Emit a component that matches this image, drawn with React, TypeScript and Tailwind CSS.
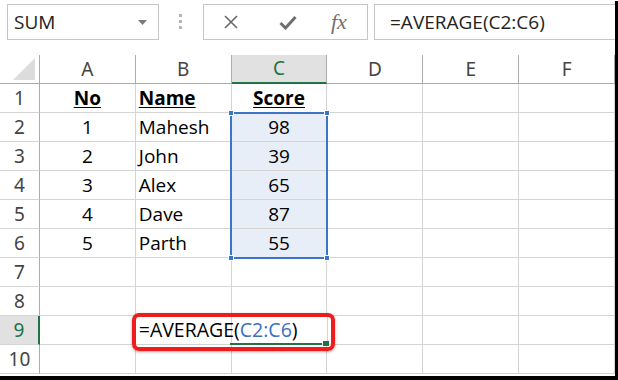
import React from "react";

const cols = ["A", "B", "C", "D", "E", "F"];

const rows: { no?: string; name?: string; score?: string }[] = [
  { no: "No", name: "Name", score: "Score" },
  { no: "1", name: "Mahesh", score: "98" },
  { no: "2", name: "John", score: "39" },
  { no: "3", name: "Alex", score: "65" },
  { no: "4", name: "Dave", score: "87" },
  { no: "5", name: "Parth", score: "55" },
  {},
  {},
  {},
  {},
];

const cellFont = { fontFamily: "'Open Sans', 'Liberation Sans', sans-serif" };

const Toolbar = () => (
  <div className="flex items-start h-[54px] pt-[3px] pl-[7px]">
    <div className="w-[152px] h-[36px] border border-[#c6c6c6] flex items-center justify-between pl-[6px] pr-[11px]">
      <span className="text-[19px] text-[#222] leading-none" style={cellFont}>
        SUM
      </span>
      <svg width="9" height="5" viewBox="0 0 9 5">
        <polygon points="0,0 9,0 4.5,5" fill="#7a7a7a" />
      </svg>
    </div>
    <div className="flex flex-col gap-[3px] ml-[20px] mt-[10px]">
      <div className="w-[3px] h-[3px] bg-[#b5b5b5]" />
      <div className="w-[3px] h-[3px] bg-[#b5b5b5]" />
      <div className="w-[3px] h-[3px] bg-[#b5b5b5]" />
    </div>
    <div className="ml-[21px] w-[165px] h-[36px] border border-[#c6c6c6] flex items-center">
      <svg width="16" height="16" viewBox="0 0 16 16" className="ml-[19px]">
        <path d="M2 2 L14 14 M14 2 L2 14" stroke="#666" strokeWidth="1.6" />
      </svg>
      <svg width="18" height="15" viewBox="0 0 18 15" className="ml-[40px]">
        <path d="M1.5 8 L6.5 13 L16.5 2" stroke="#6e6e6e" strokeWidth="3" fill="none" />
      </svg>
      <span
        className="ml-[34px] text-[22px] italic text-[#707070] leading-none"
        style={{ fontFamily: "'Liberation Serif', 'DejaVu Serif', serif" }}
      >
        fx
      </span>
    </div>
    <div className="ml-[6px] flex-1 h-[36px] border border-[#c6c6c6] border-r-0 flex items-center pl-[15px]">
      <span className="text-[19px] text-[#222] leading-none" style={cellFont}>
        =AVERAGE(C2:C6)
      </span>
    </div>
  </div>
);

const HeaderRow = () => (
  <div className="flex h-[29px]">
    <div className="w-[40px] border-r border-b border-[#ababab] relative">
      <svg width="22" height="22" viewBox="0 0 22 22" className="absolute right-[4px] bottom-[3px]">
        <polygon points="22,0 22,22 0,22" fill="#dcdcdc" />
      </svg>
    </div>
    {cols.map((c) => (
      <div
        key={c}
        className={
          c === "C"
            ? "w-[96px] bg-[#e1e1e1] border-b-2 border-[#217346] border-r border-r-[#ababab] flex items-center justify-center text-[19px] text-[#217346]"
            : "w-[96px] border-r border-b border-[#ababab] flex items-center justify-center text-[19px] text-[#444]"
        }
        style={{ fontFamily: "'Noto Sans', 'Open Sans', sans-serif" }}
      >
        {c}
      </div>
    ))}
  </div>
);

const App = () => {
  return (
    <div className="w-[618px] h-[380px] bg-black">
      <div className="w-[615px] h-[375px] mt-[1px] bg-white overflow-hidden relative">
        <Toolbar />
        <HeaderRow />
        {rows.map((r, i) => {
          const n = i + 1;
          const sel = n >= 2 && n <= 6;
          const active = n === 9;
          const header = n === 1;
          return (
            <div key={n} className="flex h-[29px]">
              <div
                className={
                  active
                    ? "w-[40px] bg-[#e1e1e1] border-r-2 border-r-[#217346] border-b border-b-[#d4d4d4] flex items-center justify-center text-[19px] text-[#217346]"
                    : "w-[40px] border-r border-r-[#ababab] border-b border-b-[#d4d4d4] flex items-center justify-center text-[19px] text-[#444]"
                }
                style={{ fontFamily: "'Noto Sans', 'Open Sans', sans-serif" }}
              >
                {n}
              </div>
              <div
                className={`w-[96px] border-r border-b border-[#d4d4d4] flex items-center justify-center text-[19px] text-black ${header ? "font-bold underline underline-offset-2" : ""}`}
                style={cellFont}
              >
                {r.no}
              </div>
              <div
                className={`w-[96px] border-r border-b border-[#d4d4d4] flex items-center pl-[3px] text-[19px] text-black whitespace-nowrap ${header ? "font-bold underline underline-offset-2" : ""}`}
                style={cellFont}
              >
                {r.name}
                {active && (
                  <span className="relative z-10 text-[19.5px]">
                    =AVERAGE(<span className="text-[#3a6fc4]">C2:C6</span>)
                  </span>
                )}
              </div>
              <div
                className={`w-[96px] border-r border-b border-[#d4d4d4] flex items-center justify-center text-[19px] text-black ${sel ? "bg-[#e8eef8]" : ""} ${header ? "font-bold underline underline-offset-2" : ""}`}
                style={cellFont}
              >
                {r.score}
              </div>
              <div className="w-[96px] border-r border-b border-[#d4d4d4]" />
              <div className="w-[96px] border-r border-b border-[#d4d4d4]" />
              <div className="w-[96px] border-r border-b border-[#d4d4d4]" />
            </div>
          );
        })}

        {/* selection C2:C6 */}
        <div className="absolute left-[230px] top-[111px] w-[98px] h-[147px] border-2 border-[#3c74c8] pointer-events-none">
          <div className="absolute -left-[4px] -top-[4px] w-[6px] h-[6px] bg-[#3c74c8] border border-white" />
          <div className="absolute -right-[4px] -top-[4px] w-[6px] h-[6px] bg-[#3c74c8] border border-white" />
          <div className="absolute -left-[4px] -bottom-[4px] w-[6px] h-[6px] bg-[#3c74c8] border border-white" />
          <div className="absolute -right-[4px] -bottom-[4px] w-[6px] h-[6px] bg-[#3c74c8] border border-white" />
        </div>

        {/* active cell edge + fill handle */}
        <div className="absolute left-[230px] top-[342px] w-[92px] h-[2px] bg-[#217346]" />
        <div className="absolute left-[323px] top-[340px] w-[6px] h-[5px] bg-[#217346]" />

        {/* red highlight */}
        <div className="absolute left-[132px] top-[312px] w-[203px] h-[38px] border-4 border-[#ee1c1c] rounded-[7px] shadow-[0_1px_3px_rgba(0,0,0,0.35)] pointer-events-none" />
      </div>
    </div>
  );
};

export default App;
